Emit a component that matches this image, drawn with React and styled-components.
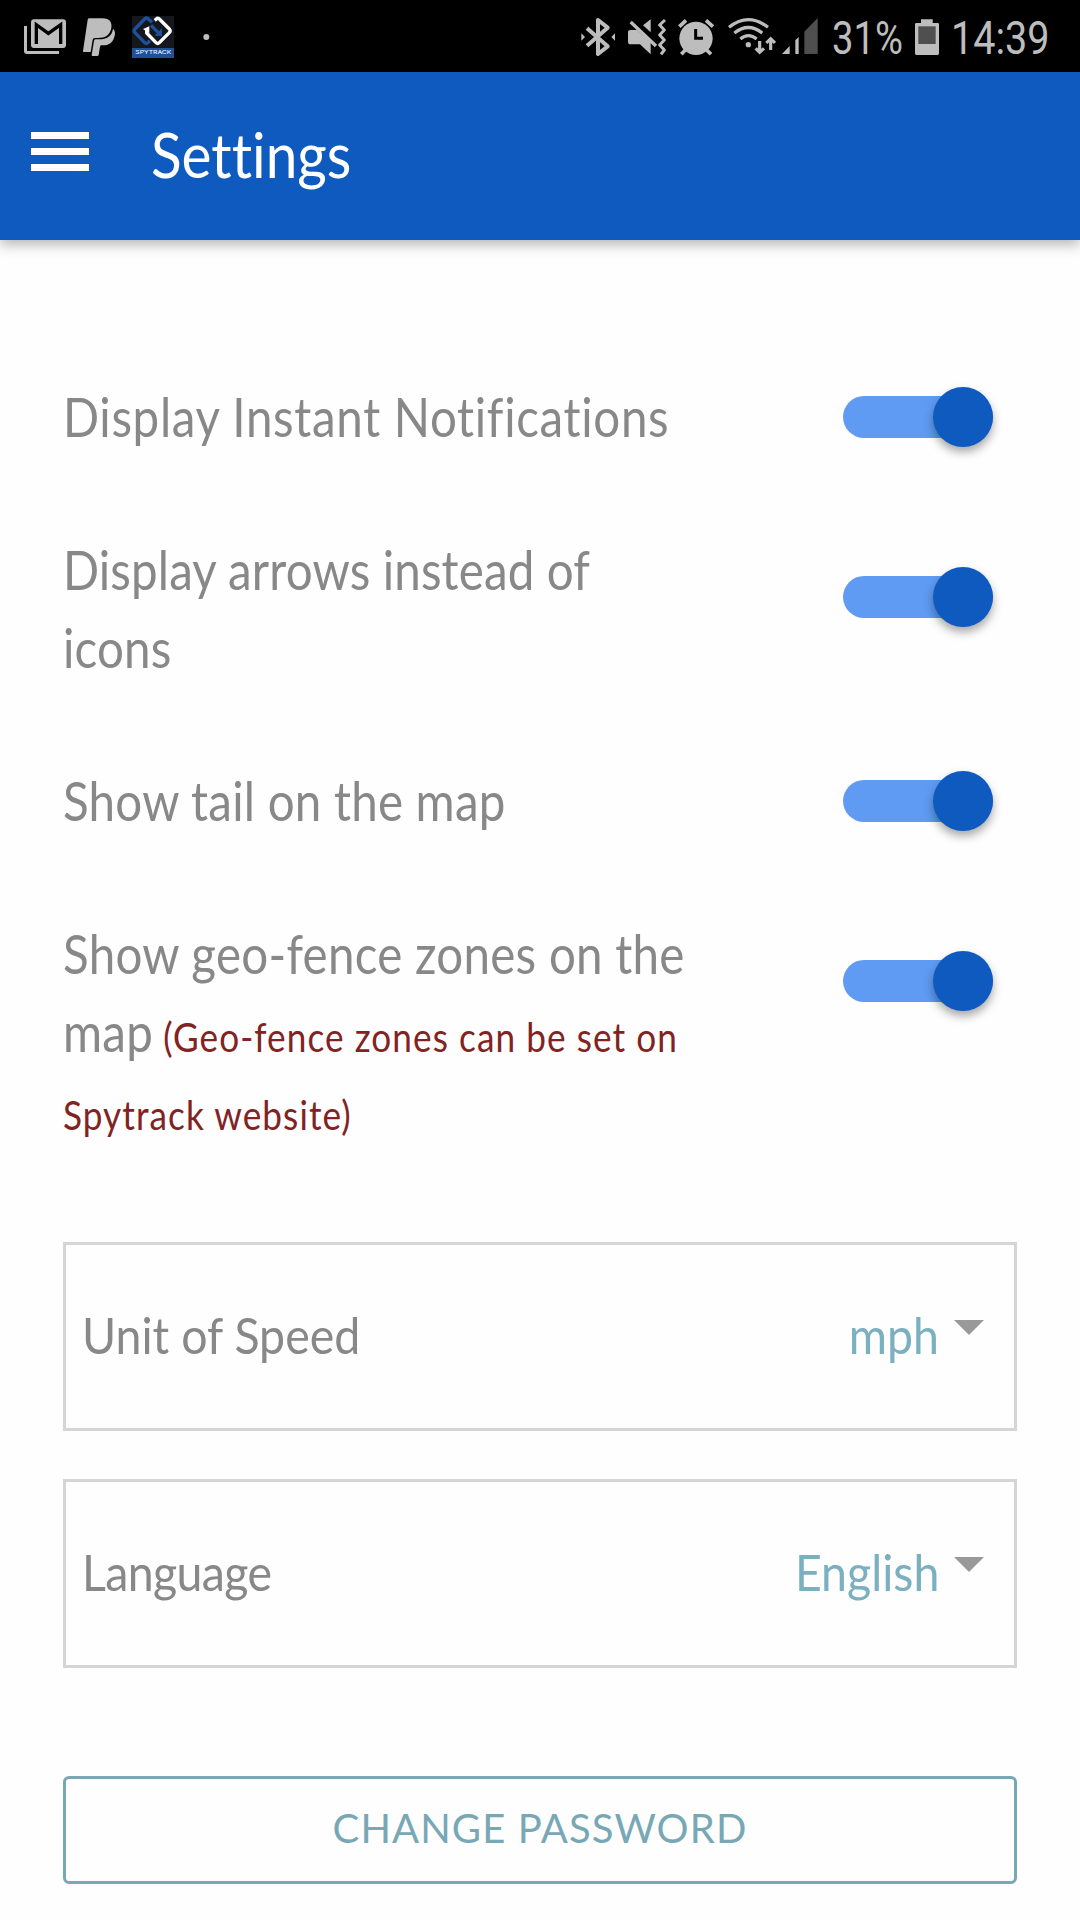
import React, { useState } from "react";
import styled, { createGlobalStyle } from "styled-components";

const toggles = [
	{ id: "notifications", label: "Display Instant Notifications", spacing: 0.75 },
	{ id: "arrows", label: "Display arrows instead of icons", spacing: 0.15 },
	{ id: "tail", label: "Show tail on the map", spacing: 0.25 },
	{
		id: "zones",
		label: "Show geo-fence zones on the map",
		note: "(Geo-fence zones can be set on Spytrack website)",
		spacing: 0.3,
	},
];

// status bar icons are drawn on a grid three times finer than the screen
function StatusIcon({ x, w, gap, children }) {
	return (
		<StatusSvg
			width={w / 3}
			height="72"
			viewBox={`${x} 0 ${w} 216`}
			fill="#bdbdbd"
			$gap={gap}
		>
			{children}
		</StatusSvg>
	);
}

function StatusBar() {
	return (
		<StatusContainer>
			<StatusGroup>
				<StatusIcon x={72} w={126}>
					<path d="M72 78h9v75h96v9H81q-9 0-9-9z" />
					<rect x="93" y="58" width="105" height="86" rx="9" />
					<path
						d="M109 132V74L145 100L182 74V132"
						fill="none"
						stroke="#000"
						strokeWidth="10"
					/>
				</StatusIcon>
				<StatusIcon x={249} w={99} gap={17}>
					<path d="M268 55H308C328 55 337 66 334 84C330 105 316 114 294 114H284Q279 114 278 119L272 156H251Q249 156 249 153L263 59Q264 55 268 55Z" />
					<path d="M339 86C347 93 346 103 342 114C337 129 326 136 309 136H304Q301 136 300 140L296 165Q295 168 292 168H277Q275 168 275 165L282 122Q283 118 287 118H297C321 118 336 108 339 86Z" />
				</StatusIcon>
				<StatusIcon x={396} w={126} gap={16}>
					<rect x="396" y="48" width="126" height="126" fill="#14181c" />
					<rect x="396" y="144" width="126" height="30" fill="#1d519c" />
					<g fill="none" strokeWidth="10" strokeLinejoin="round">
						<path
							d="M456 67L444 56Q439 52 434 57L405 87Q400 93 405 98L434 128Q439 133 444 128L450 122"
							stroke="#1d519c"
						/>
						<path d="M453 76L481 104" stroke="#1d519c" />
						<path
							d="M464 61L469 57Q473 53 478 57L508 87Q513 93 508 98L478 128Q473 133 468 128L440 99V88"
							stroke="#fff"
						/>
					</g>
					<path d="M464 107L486 84V109Z" fill="#1d519c" />
					<path d="M429 87L448 79V100Z" fill="#fff" />
					<text
						x="406"
						y="162"
						fill="#fff"
						fontFamily="Inter, sans-serif"
						fontWeight="400"
						fontSize="16"
						textLength="108"
						lengthAdjust="spacingAndGlyphs"
					>
						SPYTRACK
					</text>
				</StatusIcon>
				<StatusIcon x={610} w={20} gap={29.3}>
					<circle cx="620" cy="111" r="9" />
				</StatusIcon>
			</StatusGroup>
			<StatusGroup>
				<StatusIcon x={1740} w={102}>
					<path
						d="M1758 85L1820 139L1791 162V60L1820 83L1758 137"
						fill="none"
						stroke="#bdbdbd"
						strokeWidth="12"
						strokeLinejoin="round"
					/>
					<path d="M1741 100L1752 111L1741 122ZM1842 100L1831 111L1842 122Z" />
				</StatusIcon>
				<StatusIcon x={1881} w={114} gap={13}>
					<path d="M1889 90H1908L1949 127V163L1917 133H1889Q1881 133 1881 126V97Q1881 90 1889 90Z" />
					<path d="M1926 76L1949 58V97Z" />
					<path
						d="M1889 66L1965 138"
						fill="none"
						stroke="#bdbdbd"
						strokeWidth="10"
					/>
					<path
						d="M1992 60L1976 75L1990 90L1976 105L1990 120L1976 135L1990 150L1980 163"
						fill="none"
						stroke="#bdbdbd"
						strokeWidth="9"
						strokeLinejoin="round"
					/>
				</StatusIcon>
				<StatusIcon x={2031} w={110} gap={12}>
					<circle cx="2085" cy="115" r="50" />
					<g fill="none" stroke="#bdbdbd" strokeWidth="11">
						<path d="M2035 80L2055 61M2115 61L2136 80" />
						<path d="M2055 148L2041 163M2115 148L2130 163" />
					</g>
					<path
						d="M2084 87V115H2106"
						fill="none"
						stroke="#000"
						strokeWidth="9"
					/>
				</StatusIcon>
				<StatusIcon x={2181} w={146} gap={13.3}>
					<g fill="none" stroke="#bdbdbd" strokeWidth="9.5">
						<path d="M2184 82Q2242 36 2301 82" />
						<path d="M2200 99Q2242 66 2284 99" />
						<path d="M2218 117Q2242 97 2267 117" />
						<path d="M2276 123V155M2264 145L2276 157L2289 145" />
						<path d="M2309 150V119M2296 129L2309 116L2322 129" />
					</g>
					<circle cx="2242" cy="134" r="8" />
				</StatusIcon>
				<StatusIcon x={2344} w={108} gap={5.7}>
					<path d="M2344 162L2367 138V162ZM2384 121L2394 111V162H2384Z" />
					<path d="M2411 95L2451 54V162H2411Z" fill="#4f4f4f" />
				</StatusIcon>
				<StatusText $width={71} $gap={14} $squeeze={0.83}>
					31%
				</StatusText>
				<StatusIcon x={2745} w={72} gap={12}>
					<path d="M2763 58H2798V69H2813Q2817 69 2817 73V160Q2817 165 2813 165H2749Q2745 165 2745 160V73Q2745 69 2749 69H2763Z" />
					<rect x="2755" y="79" width="52" height="53" fill="#4f4f4f" />
				</StatusIcon>
				<StatusText $width={98} $gap={12} $squeeze={0.86}>
					14:39
				</StatusText>
			</StatusGroup>
		</StatusContainer>
	);
}

function App() {
	const [values, setValues] = useState({
		notifications: true,
		arrows: true,
		tail: true,
		zones: true,
	});

	const toggle = (id) => setValues({ ...values, [id]: !values[id] });

	return (
		<>
			<GlobalStyle />
			<Screen>
				<StatusBar />
				<Header>
					<MenuButton aria-label="Menu">
						<MenuLine />
						<MenuLine />
						<MenuLine />
					</MenuButton>
					<Title>Settings</Title>
				</Header>
				<Content>
					<ToggleList>
						{toggles.map((item) => (
							<ToggleRow key={item.id}>
								<ToggleLabel $spacing={item.spacing}>
									{item.label}
									{item.note && <Note> {item.note}</Note>}
								</ToggleLabel>
								<SwitchCell>
									<Switch
										role="switch"
										aria-checked={values[item.id]}
										aria-label={item.label}
										$on={values[item.id]}
										onClick={() => toggle(item.id)}
									>
										<Thumb />
									</Switch>
								</SwitchCell>
							</ToggleRow>
						))}
					</ToggleList>
					<SelectList>
						<SelectBox>
							<SelectLabel>Unit of Speed</SelectLabel>
							<SelectValue>mph</SelectValue>
							<Arrow />
						</SelectBox>
						<SelectBox>
							<SelectLabel $spacing={-0.7}>Language</SelectLabel>
							<SelectValue>English</SelectValue>
							<Arrow />
						</SelectBox>
					</SelectList>
					<PasswordButton>change password</PasswordButton>
				</Content>
			</Screen>
		</>
	);
}

const GlobalStyle = createGlobalStyle`
	* {
		box-sizing: border-box;
	}
	body {
		margin: 0;
		background: #fefefe;
		font-family: Lato, sans-serif;
	}
	button {
		border: 0;
		padding: 0;
		background: none;
		font-family: inherit;
		cursor: pointer;
	}
`;
const Screen = styled.div`
	width: 1080px;
	height: 1920px;
	overflow: hidden;
	display: flex;
	flex-direction: column;
`;
const StatusContainer = styled.div`
	height: 72px;
	flex-shrink: 0;
	padding: 0 31px 0 24px;
	display: flex;
	justify-content: space-between;
	background: #000;
`;
const StatusGroup = styled.div`
	display: flex;
`;
const StatusSvg = styled.svg`
	display: block;
	flex-shrink: 0;
	margin-left: ${(props) => props.$gap || 0}px;
`;
const StatusText = styled.span`
	width: ${(props) => props.$width}px;
	margin-left: ${(props) => props.$gap}px;
	font-family: Roboto, sans-serif;
	font-size: 46px;
	line-height: 76px;
	white-space: nowrap;
	color: #bdbdbd;
	transform: scaleX(${(props) => props.$squeeze});
	transform-origin: left;
`;
const Header = styled.header`
	height: 168px;
	flex-shrink: 0;
	padding-left: 31px;
	display: flex;
	background: #0f5abf;
	box-shadow: 0 5px 12px rgba(0, 0, 0, 0.28);
`;
const MenuButton = styled.button`
	width: 58px;
	height: 39px;
	margin-top: 60px;
	display: flex;
	flex-direction: column;
	justify-content: space-between;
`;
const MenuLine = styled.span`
	width: 58px;
	height: 7px;
	background: #fff;
`;
const Title = styled.h1`
	margin: 45px 0 0 62px;
	font-size: 62px;
	font-weight: 400;
	font-variant-ligatures: none;
	line-height: 74px;
	color: #fff;
	transform: scaleX(0.915);
	transform-origin: left;
`;
const Content = styled.main`
	padding: 87px 63px 0;
`;
const ToggleList = styled.section`
	display: flex;
	flex-direction: column;
`;
const ToggleRow = styled.div`
	padding: 24px 24px 24px 0;
	display: flex;
	justify-content: space-between;
`;
const ToggleLabel = styled.p`
	width: 718px;
	margin: 0;
	align-self: center;
	font-size: 54px;
	font-weight: 400;
	line-height: 78px;
	letter-spacing: ${(props) => props.$spacing}px;
	color: #888;
	transform: scaleX(0.88);
	transform-origin: left;
`;
const Note = styled.span`
	font-size: 40px;
	line-height: 1;
	letter-spacing: 1.2px;
	color: #812323;
`;
const SwitchCell = styled.div`
	height: 132px;
	display: flex;
	align-items: center;
`;
const Switch = styled.button`
	width: 150px;
	height: 42px;
	display: flex;
	align-items: center;
	justify-content: ${(props) => (props.$on ? "flex-end" : "flex-start")};
	border-radius: 21px;
	background: ${(props) => (props.$on ? "#5f9bf3" : "#b9b9b9")};
`;
const Thumb = styled.span`
	width: 60px;
	height: 60px;
	flex-shrink: 0;
	border-radius: 50%;
	background: #0f5abf;
	box-shadow: 0 5px 10px rgba(0, 0, 0, 0.35);
`;
const SelectList = styled.section`
	margin-top: 69px;
	display: flex;
	flex-direction: column;
	gap: 48px;
`;
const SelectBox = styled.div`
	height: 189px;
	padding: 0 30px 3px 16px;
	display: flex;
	align-items: center;
	border: 3px solid #d5d5d5;
	font-size: 50px;
`;
const SelectLabel = styled.span`
	flex: 1;
	letter-spacing: ${(props) => props.$spacing || 0}px;
	color: #888;
	transform: scaleX(0.93);
	transform-origin: left;
`;
const SelectValue = styled.span`
	color: #7bb0c0;
	transform: scaleX(0.93);
	transform-origin: right;
`;
const Arrow = styled.span`
	margin: -15px 0 0 15px;
	border: 15px solid transparent;
	border-top-color: #999;
	border-bottom: 0;
`;
const PasswordButton = styled.button`
	width: 100%;
	height: 108px;
	margin-top: 108px;
	padding-bottom: 5px;
	border: 3px solid #78a8b5;
	border-radius: 6px;
	font-size: 40px;
	letter-spacing: 1.1px;
	text-transform: uppercase;
	color: #78a8b5;
`;

export default App;
